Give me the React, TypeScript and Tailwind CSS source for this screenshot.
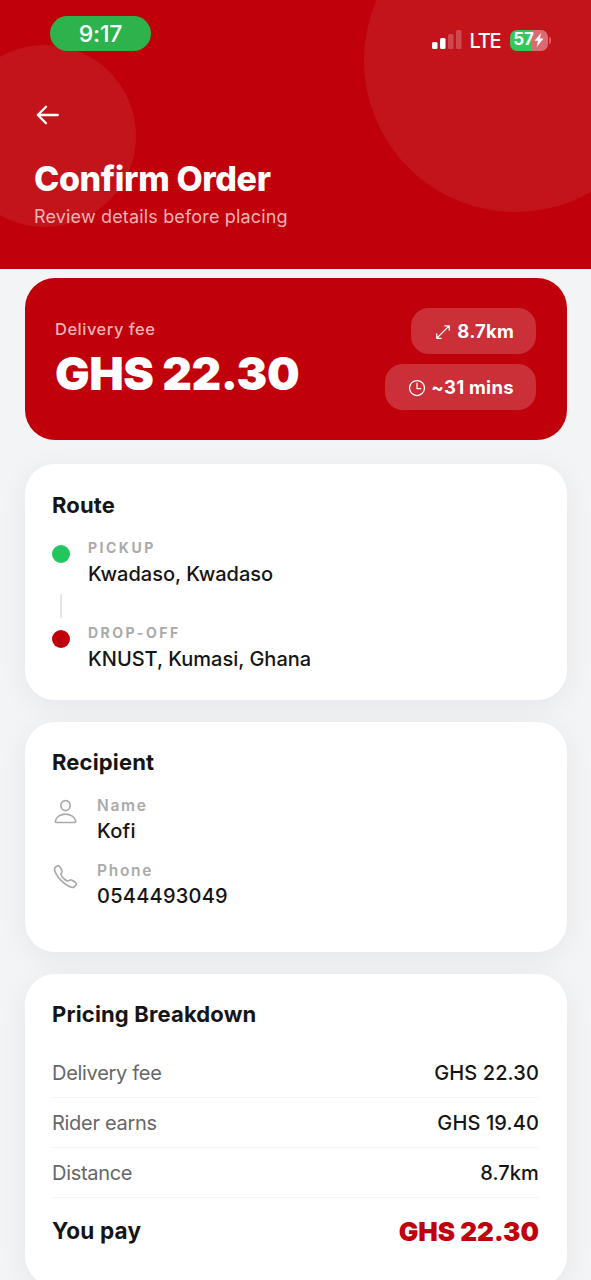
import React from "react";
import {
  IoCallOutline,
  IoPersonOutline,
  IoResizeOutline,
  IoTimeOutline,
} from "react-icons/io5";

const prices = [
  { label: "Delivery fee", value: "GHS 22.30" },
  { label: "Rider earns", value: "GHS 19.40" },
  { label: "Distance", value: "8.7km" },
];

const StatusBar = () => {
  return (
    <div className="relative flex items-start justify-between pl-[50px] pr-[40px] pt-4">
      <div className="flex h-[35px] w-[101px] items-center justify-center rounded-full bg-[#2cb34c] pt-[2px] text-[23px] font-medium tracking-[-0.1px] text-white">
        9:17
      </div>
      <div className="mt-3 flex h-6 items-center">
        <svg width="30" height="20" viewBox="0 0 30 20" fill="white">
          <rect x="0" y="12" width="5.5" height="7" rx="1.5" />
          <rect x="8" y="8" width="5.5" height="11" rx="1.5" />
          <rect x="16" y="4" width="5.5" height="15" rx="1.5" opacity="0.22" />
          <rect x="24" y="0" width="5.5" height="19" rx="1.5" opacity="0.22" />
        </svg>
        <span className="ml-2 w-[32px] pt-[1px] text-[20px] font-medium tracking-[-1.2px] text-white">
          LTE
        </span>
        <div className="ml-[8px] flex h-[21px] w-[38px] items-center justify-center rounded-[7px] bg-linear-to-r from-[#34c759] from-57% to-[#dc6a72] to-57% text-[17px] font-bold tracking-[-0.2px] text-white">
          57
          <svg width="10" height="14" viewBox="0 0 9 14" fill="white">
            <path d="M6.6 0 0 7.8h3.5L2.2 14 9 5.6H5.4Z" />
          </svg>
        </div>
        <div className="ml-[1.5px] h-[7px] w-[2px] rounded-r-full bg-[#d75e66]" />
      </div>
    </div>
  );
};

const Header = () => {
  return (
    <header className="relative h-[269px] overflow-hidden bg-[#c0000b]">
      <div className="absolute -top-[91px] left-[364px] size-[303px] rounded-full bg-[#c4141b]" />
      <div className="absolute top-[45px] -left-[46px] size-[182px] rounded-full bg-[#c4141b]" />
      <StatusBar />
      <div className="relative pl-[34px]">
        <button className="mt-[50px] block">
          <svg
            width="27"
            height="24"
            viewBox="0 0 27 24"
            fill="none"
            stroke="white"
            strokeWidth="2.3"
            strokeLinecap="round"
            strokeLinejoin="round"
          >
            <path d="M12 4.8 3.8 13l8.2 8.2M3.8 13h20" />
          </svg>
        </button>
        <h1 className="mt-[32px] text-[34px] leading-[42px] font-extrabold tracking-[-0.36px] text-white">
          Confirm Order
        </h1>
        <p className="mt-[4px] text-[18px] leading-[26px] tracking-[0.16px] text-[#f0b3b6]">
          Review details before placing
        </p>
      </div>
    </header>
  );
};

const FeeCard = () => {
  return (
    <section className="flex h-[162px] items-center justify-between rounded-[30px] bg-[#c0000b] px-[30.5px]">
      <div>
        <p className="text-[16.5px] leading-[22px] font-medium tracking-[0.5px] text-[#f0b3b6]">
          Delivery fee
        </p>
        <p className="mt-[6px] text-[46px] leading-[54px] font-black tracking-[-0.45px] text-white">
          GHS 22.30
        </p>
      </div>
      <div className="flex flex-col items-end gap-[10px] text-[18.5px] font-bold tracking-[0.25px] text-white">
        <div className="flex h-[46px] w-[125px] items-center justify-center gap-[4.5px] rounded-[18px] bg-[#cb2f37] pt-[1px]">
          <IoResizeOutline className="size-[20px] -scale-x-100 rotate-90" />
          8.7km
        </div>
        <div className="flex h-[46px] w-[151px] items-center justify-center gap-[4px] rounded-[18px] bg-[#cb2f37] pt-[1px]">
          <IoTimeOutline className="size-[20px]" />
          ~31 mins
        </div>
      </div>
    </section>
  );
};

const Card = ({
  title,
  className,
  children,
}: {
  title: string;
  className: string;
  children: React.ReactNode;
}) => {
  return (
    <section
      className={`rounded-[30px] bg-white px-[27.5px] shadow-[0_6px_30px_rgba(17,24,39,0.06)] ${className}`}
    >
      <h2 className="text-[22px] leading-[30px] font-bold tracking-[0.15px]">
        {title}
      </h2>
      {children}
    </section>
  );
};

const Stop = ({
  label,
  place,
  dot,
}: {
  label: string;
  place: string;
  dot: string;
}) => {
  return (
    <div className="flex gap-[18px]">
      <div className={`mt-[8px] size-[18px] rounded-full ${dot}`} />
      <div>
        <p className="mt-[1px] text-[14px] leading-[20px] font-bold tracking-[2.5px] text-[#aaaaaa]">
          {label}
        </p>
        <p className="mt-[2px] text-[20px] leading-[28px] font-medium">
          {place}
        </p>
      </div>
    </div>
  );
};

const Contact = ({
  label,
  value,
  icon,
}: {
  label: string;
  value: string;
  icon: React.ReactNode;
}) => {
  return (
    <div className="flex gap-[18px]">
      <div className="mt-[2px] text-[27px] text-[#aaaaaa]">{icon}</div>
      <div>
        <p className="text-[15.5px] leading-[20px] font-semibold tracking-[1.7px] text-[#aaaaaa]">
          {label}
        </p>
        <p className="mt-[1px] text-[20px] leading-[28px] font-medium tracking-[0.25px]">
          {value}
        </p>
      </div>
    </div>
  );
};

const App = () => {
  return (
    <div className="h-[1280px] w-[591px] overflow-hidden bg-[#f3f4f6] font-['Inter','Liberation_Sans',sans-serif] text-[#151515]">
      <Header />
      <main className="flex flex-col px-[24.5px] pt-[9px]">
        <FeeCard />
        <Card title="Route" className="mt-6 h-[236px] pt-[26px]">
          <div className="mt-[17px]">
            <Stop
              label="PICKUP"
              place="Kwadaso, Kwadaso"
              dot="bg-[#22c55e]"
            />
            <div className="mt-[6px] mb-[4px] ml-[7.5px] h-[24px] w-[2px] bg-[#e5e5e5]" />
            <Stop
              label="DROP-OFF"
              place="KNUST, Kumasi, Ghana"
              dot="bg-[#c0000b]"
            />
          </div>
        </Card>
        <Card title="Recipient" className="mt-[22px] h-[230px] pt-[25px]">
          <div className="mt-[19px] flex flex-col gap-[16px]">
            <Contact label="Name" value="Kofi" icon={<IoPersonOutline />} />
            <Contact
              label="Phone"
              value="0544493049"
              icon={<IoCallOutline />}
            />
          </div>
        </Card>
        <Card title="Pricing Breakdown" className="mt-[22px] h-[312px] pt-[25px]">
          <div className="mt-[19px]">
            {prices.map((item) => (
              <div
                key={item.label}
                className="flex h-[50px] items-center justify-between border-b-[1.5px] border-[#f3f4f6] text-[20px]"
              >
                <span className="tracking-[-0.3px] text-[#666666]">
                  {item.label}
                </span>
                <span className="font-medium tracking-[0.12px]">
                  {item.value}
                </span>
              </div>
            ))}
          </div>
          <div className="mt-[18px] flex items-center justify-between leading-[32px]">
            <span className="-mt-[2px] text-[22.5px] font-bold tracking-[0.2px]">
              You pay
            </span>
            <span className="text-[26px] font-black text-[#c0000b]">
              GHS 22.30
            </span>
          </div>
        </Card>
      </main>
    </div>
  );
};

export default App;
